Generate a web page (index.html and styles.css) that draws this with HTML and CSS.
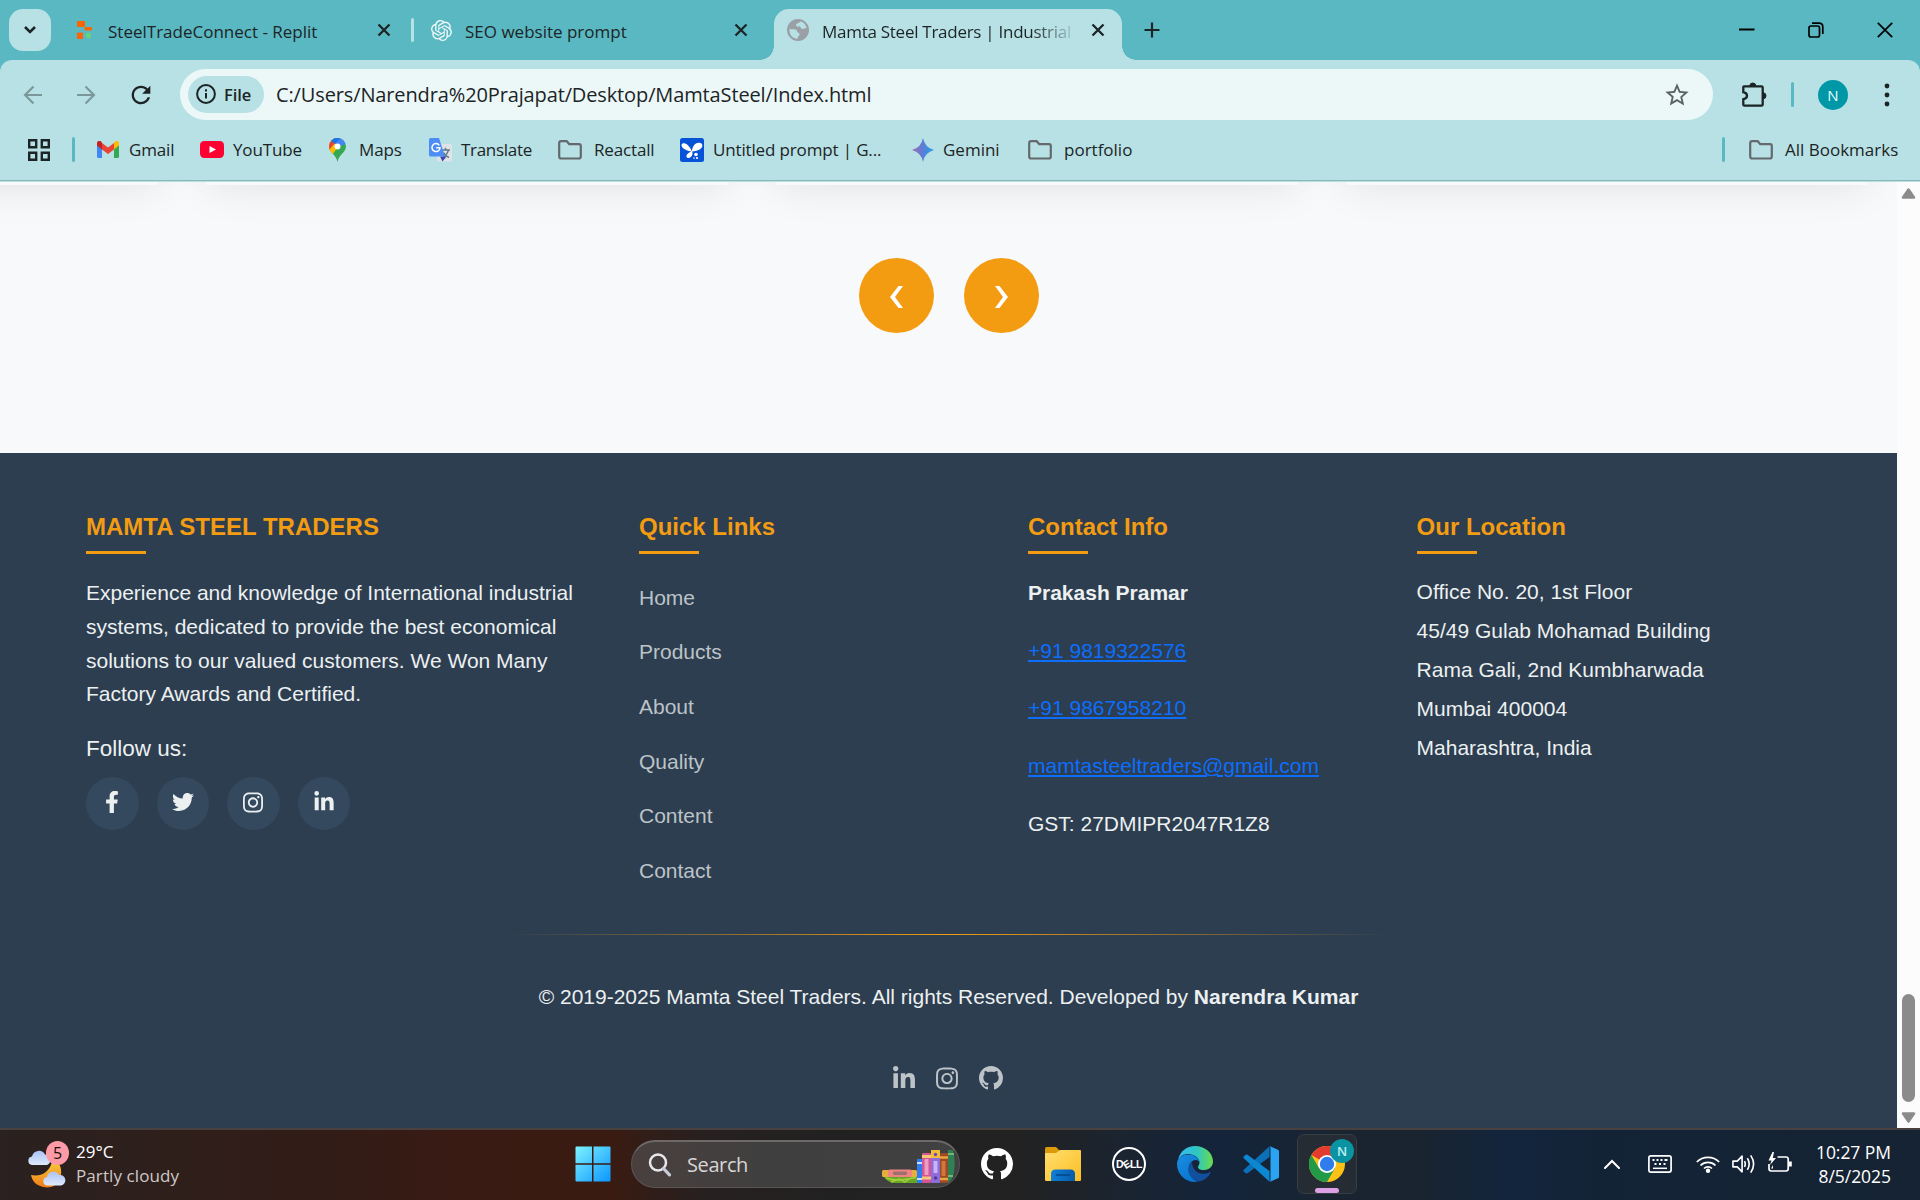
FILE: index.html
```html
<!DOCTYPE html>
<html lang="en">
<head>
<meta charset="utf-8">
<title>Mamta Steel Traders | Industrial</title>
<link rel="stylesheet" href="styles.css">
</head>
<body>
<svg class="defs" aria-hidden="true">
  <symbol id="x" viewBox="0 0 14 14"><path d="M1.5 1.5l11 11M12.500 1.500l-11 11" fill="none" stroke="currentColor" stroke-width="2.300"/></symbol>
  <symbol id="folder" viewBox="0 0 24 20"><path d="M1.200 3.200q0-2 2-2h5.600l2.500 3H21q1.800 0 1.800 1.800v10.500q0 2-2 2H3.200q-2 0-2-2z" fill="none" stroke="#63696c" stroke-width="2.200" stroke-linejoin="round"/></symbol>
  <symbol id="github" viewBox="0 0 16 16"><path fill="currentColor" d="M8 0C3.580 0 0 3.580 0 8c0 3.540 2.290 6.530 5.470 7.590.4.070.55-.17.55-.38 0-.19-.01-.82-.01-1.490-2.010.37-2.530-.49-2.690-.94-.09-.23-.48-.94-.82-1.130-.28-.15-.68-.52-.01-.53.63-.01 1.080.58 1.230.82.72 1.210 1.870.87 2.330.66.070-.52.280-.87.510-1.070-1.780-.2-3.640-.89-3.640-3.950 0-.87.310-1.590.820-2.150-.08-.2-.36-1.020.080-2.120 0 0 .67-.21 2.200.82.64-.18 1.320-.27 2-.27s1.360.09 2 .27c1.530-1.040 2.200-.82 2.200-.82.440 1.100.160 1.920.080 2.120.51.560.820 1.270.820 2.150 0 3.070-1.870 3.750-3.650 3.950.29.250.540.730.540 1.480 0 1.070-.01 1.930-.01 2.200 0 .21.150.460.550.380A8.010 8.010 0 0 0 16 8c0-4.420-3.580-8-8-8z"/></symbol>
  <symbol id="instagram" viewBox="0 0 448 512"><path fill="currentColor" d="M224.1 141c-63.6 0-114.9 51.3-114.9 114.9s51.3 114.9 114.9 114.9S339 319.5 339 255.9 287.7 141 224.1 141zm0 189.6c-41.1 0-74.7-33.5-74.7-74.7s33.5-74.7 74.7-74.7 74.7 33.5 74.7 74.7-33.6 74.7-74.7 74.7zm146.4-194.3c0 14.9-12 26.8-26.8 26.8-14.9 0-26.8-12-26.8-26.8s12-26.8 26.8-26.8 26.8 12 26.8 26.8zm76.1 27.2c-1.7-35.9-9.9-67.7-36.2-93.9-26.2-26.2-58-34.4-93.9-36.2-37-2.1-147.9-2.1-184.9 0-35.8 1.7-67.6 9.9-93.9 36.1s-34.4 58-36.2 93.9c-2.1 37-2.1 147.9 0 184.9 1.7 35.9 9.9 67.7 36.2 93.9s58 34.4 93.9 36.2c37 2.1 147.9 2.1 184.9 0 35.9-1.7 67.7-9.9 93.9-36.2 26.2-26.2 34.4-58 36.2-93.9 2.1-37 2.1-147.8 0-184.8zM398.8 388c-7.8 19.6-22.9 34.7-42.6 42.6-29.5 11.7-99.5 9-132.1 9s-102.7 2.6-132.1-9c-19.6-7.8-34.7-22.9-42.6-42.6-11.7-29.5-9-99.5-9-132.1s-2.6-102.7 9-132.1c7.8-19.6 22.9-34.7 42.6-42.6 29.5-11.7 99.5-9 132.1-9s102.7-2.6 132.1 9c19.6 7.8 34.7 22.9 42.6 42.6 11.7 29.5 9 99.5 9 132.1s2.7 102.7-9 132.1z"/></symbol>
  <symbol id="linkedin" viewBox="0 0 448 512"><path fill="currentColor" d="M100.28 448H7.4V148.9h92.88zM53.79 108.1C24.09 108.1 0 83.5 0 53.8a53.79 53.79 0 0 1 107.58 0c0 29.7-24.1 54.3-53.79 54.3zM447.9 448h-92.68V302.4c0-34.7-.7-79.2-48.29-79.2-48.29 0-55.69 37.7-55.69 76.7V448h-92.78V148.9h89.08v40.8h1.3c12.4-23.5 42.69-48.3 87.88-48.3 94 0 111.28 61.9 111.28 142.3V448z"/></symbol>
</svg>

<header class="chrome">
  <div class="tabstrip">
    <div class="tab-search"><svg width="14" height="10" viewBox="0 0 14 10"><path d="M2 2l5 5 5-5" fill="none" stroke="#1d2426" stroke-width="2.600"/></svg></div>
    <div class="tab tab-replit">
      <svg width="16" height="18" viewBox="0 0 16 18"><rect width="8" height="6" rx="1" fill="#fb6500"/><rect x="7.500" y="6" width="7.500" height="3.500" rx="1" fill="#fb6500"/><rect y="11.500" width="6" height="6.500" rx="1" fill="#fb6500"/><circle cx="11.500" cy="14.500" r="2.700" fill="#63d67c"/></svg>
      <span class="title">SteelTradeConnect - Replit</span>
      <svg class="close" width="14" height="14"><use href="#x"/></svg>
    </div>
    <i class="tab-sep"></i>
    <div class="tab tab-seo">
      <svg width="21" height="21" viewBox="0 0 24 24"><path fill="#eefafa" d="M22.2819 9.8211a5.9847 5.9847 0 0 0-.5157-4.9108 6.0462 6.0462 0 0 0-6.5098-2.9A6.0651 6.0651 0 0 0 4.9807 4.1818a5.9847 5.9847 0 0 0-3.9977 2.9 6.0462 6.0462 0 0 0 .7427 7.0966 5.98 5.98 0 0 0 .511 4.9107 6.051 6.051 0 0 0 6.5146 2.9001A5.9847 5.9847 0 0 0 13.2599 24a6.0557 6.0557 0 0 0 5.7718-4.2058 5.9894 5.9894 0 0 0 3.9977-2.9001 6.0557 6.0557 0 0 0-.7475-7.0729zm-9.022 12.6081a4.4755 4.4755 0 0 1-2.8764-1.0408l.1419-.0804 4.7783-2.7582a.7948.7948 0 0 0 .3927-.6813v-6.7369l2.02 1.1686a.071.071 0 0 1 .038.052v5.5826a4.504 4.504 0 0 1-4.4945 4.4944zm-9.6607-4.1254a4.4708 4.4708 0 0 1-.5346-3.0137l.142.0852 4.783 2.7582a.7712.7712 0 0 0 .7806 0l5.8428-3.3685v2.3324a.0804.0804 0 0 1-.0332.0615L9.74 19.9502a4.4992 4.4992 0 0 1-6.1408-1.6464zM2.3408 7.8956a4.485 4.485 0 0 1 2.3655-1.9728V11.6a.7664.7664 0 0 0 .3879.6765l5.8144 3.3543-2.0201 1.1685a.0757.0757 0 0 1-.071 0l-4.8303-2.7865A4.504 4.504 0 0 1 2.3408 7.872zm16.5963 3.8558L13.1038 8.364 15.1192 7.2a.0757.0757 0 0 1 .071 0l4.8303 2.7913a4.4944 4.4944 0 0 1-.6765 8.1042v-5.6772a.79.79 0 0 0-.407-.667zm2.0107-3.0231l-.142-.0852-4.7735-2.7818a.7759.7759 0 0 0-.7854 0L9.409 9.2297V6.8974a.0662.0662 0 0 1 .0284-.0615l4.8303-2.7866a4.4992 4.4992 0 0 1 6.6802 4.66zM8.3065 12.863l-2.02-1.1638a.0804.0804 0 0 1-.038-.0567V6.0742a4.4992 4.4992 0 0 1 7.3757-3.4537l-.142.0805L8.704 5.459a.7948.7948 0 0 0-.3927.6813zm1.0976-2.3654l2.602-1.4998 2.6069 1.4998v2.9994l-2.5974 1.4997-2.6067-1.4997Z"/></svg>
      <span class="title">SEO website prompt</span>
      <svg class="close" width="14" height="14"><use href="#x"/></svg>
    </div>
    <div class="tab tab-active">
      <svg width="22" height="22" viewBox="0 0 22 22"><circle cx="11" cy="11" r="11" fill="#9aa0a6"/><path d="M2.500 10c3 .5 7-.5 7.500 2 .3 2 2.500 1.500 2.500 3.500 0 1.500-2 2-2 4.300C5 19.500 2 15 2.500 10zM13 2.500c-.5 2-4 1.500-4 3.500s2.500 2 3.500 1.200c1.500 0 1 2.800 3 2.800s2.500-1 4-.5C19.200 6 17 3 13 2.500z" fill="#b7e1e4"/></svg>
      <span class="title">Mamta Steel Traders | Industrial</span>
      <svg class="close" width="14" height="14"><use href="#x"/></svg>
    </div>
    <svg class="newtab" width="16" height="16" viewBox="0 0 16 16"><path d="M8 .5v15M.5 8h15" stroke="#1d2426" stroke-width="2.200"/></svg>
    <div class="window-controls">
      <svg width="16" height="16" viewBox="0 0 16 16"><path d="M0 7.500h15.500" stroke="#000" stroke-width="2"/></svg>
      <svg width="16" height="16" viewBox="0 0 16 16"><rect x="1" y="4" width="10.500" height="11" rx="2" fill="none" stroke="#000" stroke-width="1.700"/><path d="M4 1.200h7q3.800 0 3.800 3.800v7" fill="none" stroke="#000" stroke-width="1.700"/></svg>
      <svg width="16" height="16" viewBox="0 0 16 16"><path d="M.8.8l14.400 14.400M15.200.8L.8 15.200" stroke="#000" stroke-width="1.700"/></svg>
    </div>
  </div>

  <div class="toolbar">
    <div class="nav">
      <svg width="20" height="20" viewBox="0 0 20 20"><path d="M10.500 1.500L2 10l8.500 8.500M2 10h17" fill="none" stroke="#7b9799" stroke-width="2.100"/></svg>
      <svg width="20" height="20" viewBox="0 0 20 20"><path d="M9.500 1.500L18 10l-8.500 8.500M18 10H1" fill="none" stroke="#7b9799" stroke-width="2.100"/></svg>
      <svg width="28" height="28" viewBox="0 0 24 24"><path fill="#1d2426" d="M17.650 6.350C16.200 4.900 14.210 4 12 4c-4.420 0-7.990 3.580-7.990 8s3.570 8 7.990 8c3.730 0 6.840-2.550 7.730-6h-2.080c-.82 2.330-3.040 4-5.650 4-3.310 0-6-2.690-6-6s2.690-6 6-6c1.660 0 3.140.69 4.220 1.780L13 11h7V4l-2.350 2.350z"/></svg>
    </div>
    <div class="omnibox">
      <div class="chip">
        <svg width="20" height="20" viewBox="0 0 20 20"><circle cx="10" cy="10" r="8.900" fill="none" stroke="#1d2426" stroke-width="2"/><path d="M10 9v5.500M10 5.200v2.200" stroke="#1d2426" stroke-width="2"/></svg>
        <span>File</span>
      </div>
      <span class="url">C:/Users/Narendra%20Prajapat/Desktop/MamtaSteel/Index.html</span>
      <svg class="star" width="28" height="28" viewBox="0 0 24 24"><path fill="#5a6264" d="M22 9.240l-7.190-.62L12 2 9.190 8.630 2 9.240l5.460 4.730L5.820 21 12 17.270 18.180 21l-1.630-7.030L22 9.240zM12 15.400l-3.760 2.270 1-4.280-3.320-2.880 4.380-.38L12 6.100l1.710 4.040 4.380.38-3.320 2.880 1 4.280L12 15.400z"/></svg>
    </div>
    <svg class="puzzle" width="26" height="26" viewBox="0 0 26 26"><path d="M3 4.300h17.500q1.200 0 1.200 1.200v17q0 1.200-1.200 1.200H3.500q-1.200 0-1.200-1.200v-5.300q3.700-.5 3.700-3.400T2.300 10.200V5q0-.7.7-.7z" fill="none" stroke="#1d2426" stroke-width="2.300"/><path d="M8.800 4a3 3 0 0 1 6 0zM22 10.800a3 3 0 0 1 0 6z" fill="#1d2426" stroke="#1d2426"/></svg>
    <i class="bar-sep"></i>
    <span class="avatar">N</span>
    <svg class="dots" width="6" height="26" viewBox="0 0 6 26"><g fill="#1d2426"><circle cx="3" cy="4" r="2.400"/><circle cx="3" cy="13" r="2.400"/><circle cx="3" cy="22" r="2.400"/></g></svg>
  </div>

  <nav class="bookmarks">
    <svg class="apps" width="22" height="22" viewBox="0 0 22 22"><path d="M1.200 1.200h7v7h-7zM13.800 1.200h7v7h-7zM1.200 13.800h7v7h-7zM13.800 13.800h7v7h-7z" fill="none" stroke="#1d2426" stroke-width="2.400"/></svg>
    <i class="bar-sep"></i>
    <a class="bm bm-gmail"><svg width="22" height="17" viewBox="0 0 22 17"><path d="M0 3v12.500Q0 17 1.500 17H5V6z" fill="#4285f4"/><path d="M22 3v12.500q0 1.500-1.500 1.500H17V6z" fill="#34a853"/><path d="M17 2v6.500l5-4V2.200C22-.2 19.500-.8 17.800.6z" fill="#fbbc04"/><path d="M0 2.200v2.300l5 4V2L4.200.6C2.500-.8 0-.2 0 2.200z" fill="#c5221f"/><path d="M5 2v6.500l6 4.500 6-4.500V2l-6 4.500z" fill="#ea4335"/></svg><span>Gmail</span></a>
    <a class="bm bm-youtube"><svg width="24" height="17" viewBox="0 0 24 17"><rect width="24" height="17" rx="4.200" fill="#ff0033"/><path d="M9.500 5l6.500 3.500-6.500 3.500z" fill="#fff"/></svg><span>YouTube</span></a>
    <a class="bm bm-maps"><svg width="17" height="24" viewBox="0 0 17 24"><defs><clipPath id="pin"><path d="M8.500 0A8.500 8.500 0 0 0 0 8.500c0 6 7 7.500 8.500 15.500C10 16 17 14.500 17 8.500A8.500 8.500 0 0 0 8.500 0z"/></clipPath></defs><g clip-path="url(#pin)"><path d="M0 0h17v24H0z" fill="#34a853"/><path d="M0 4l9 4.500L3 17H0z" fill="#fbbc04"/><path d="M0 0h6l3 8-6.500 5L0 12z" fill="#ea4335"/><path d="M0 12l6-7 3 4-6 7.500z" fill="#fbbc04"/><path d="M3 0h14v6l-6 2-5-3z" fill="#4285f4"/><path d="M2 2.500L6 6l5-6H4z" fill="#1a73e8"/></g><circle cx="8.500" cy="8.500" r="3" fill="#fff"/></svg><span>Maps</span></a>
    <a class="bm bm-translate"><svg width="23" height="24" viewBox="0 0 23 24"><rect x="8" y="6" width="15" height="17.500" rx="1.500" fill="#dfe3e6"/><path d="M12.500 12h8.500M16.500 9.800V12M19.500 12q-1.500 5-6 7.500M14.500 14.500q2 4 5.500 5" stroke="#607988" stroke-width="1.400" fill="none"/><path d="M11 18.500l2.500 5 4-5z" fill="#3949ab"/><path d="M1.500 0H10l6 18.500H1.500Q0 18.500 0 17V1.500Q0 0 1.500 0z" fill="#4d8df6"/><path d="M10.300 7.300A4 4 0 1 0 11 9.700H7.200" stroke="#fff" stroke-width="1.500" fill="none"/></svg><span>Translate</span></a>
    <a class="bm bm-react"><svg width="24" height="20"><use href="#folder"/></svg><span>Reactall</span></a>
    <a class="bm bm-prompt"><svg width="24" height="24" viewBox="0 0 24 24"><rect width="24" height="24" rx="2.500" fill="#0653d8"/><path d="M12 13.500C8 13.500 1 10.500 1.500 7s7-2.500 10.500 6.500zM12 13.500C12 7 17 3.500 20.500 5s3 7.500-8.500 8.500zM12 13c1.500 3.500-.5 6.800-3.500 7s-3.500-4 3.500-7z" fill="#fff"/><circle cx="16" cy="16.500" r="1.800" fill="#fff"/><circle cx="17" cy="20" r="1.100" fill="#fff"/><circle cx="14" cy="20" r=".8" fill="#fff"/></svg><span>Untitled prompt | G...</span></a>
    <a class="bm bm-gemini"><svg width="22" height="24" viewBox="0 0 22 22" preserveAspectRatio="none"><defs><linearGradient id="gem"><stop offset="0" stop-color="#a06bb0"/><stop offset=".5" stop-color="#5a7fd8"/><stop offset="1" stop-color="#1fa2e6"/></linearGradient></defs><path d="M11 0q1.800 8.800 11 11-9.200 2.200-11 11-1.800-8.800-11-11 9.200-2.200 11-11z" fill="url(#gem)"/></svg><span>Gemini</span></a>
    <a class="bm bm-portfolio"><svg width="24" height="20"><use href="#folder"/></svg><span>portfolio</span></a>
    <i class="bar-sep last-sep"></i>
    <a class="bm bm-all"><svg width="24" height="20"><use href="#folder"/></svg><span>All Bookmarks</span></a>
  </nav>
</header>

<div class="viewport">
  <div class="page">
    <section class="carousel">
      <div class="card-row"><i></i><i></i><i></i><i></i></div>
      <div class="arrows">
        <button><svg width="15" height="24" viewBox="0 0 15 24"><path d="M9.500 1H14L6 12l8 11H9.500L1 12z" fill="#fff"/></svg></button>
        <button><svg width="15" height="24" viewBox="0 0 15 24"><path d="M5.500 1H1l8 11-8 11h4.500L14 12z" fill="#fff"/></svg></button>
      </div>
    </section>
    <footer class="footer">
      <div class="columns">
        <div>
          <h4>MAMTA STEEL TRADERS</h4>
          <p class="about">Experience and knowledge of International industrial systems, dedicated to provide the best economical solutions to our valued customers. We Won Many Factory Awards and Certified.</p>
          <div class="follow">Follow us:</div>
          <div class="social">
            <a><svg width="14" height="22" viewBox="0 0 320 512"><path fill="currentColor" d="M279.14 288l14.22-92.66h-88.91v-60.13c0-25.35 12.42-50.06 52.24-50.06h40.42V6.26S260.43 0 225.36 0c-73.22 0-121.08 44.38-121.08 124.72v70.62H22.89V288h81.39v224h100.17V288z"/></svg></a>
            <a><svg width="22" height="22" viewBox="0 0 512 512"><path fill="currentColor" d="M459.37 151.716c.325 4.548.325 9.097.325 13.645 0 138.72-105.583 298.558-298.558 298.558-59.452 0-114.68-17.219-161.137-47.106 8.447.974 16.568 1.299 25.34 1.299 49.055 0 94.213-16.568 130.274-44.832-46.132-.975-84.792-31.188-98.112-72.772 6.498.974 12.995 1.624 19.818 1.624 9.421 0 18.843-1.3 27.614-3.573-48.081-9.747-84.143-51.98-84.143-102.985v-1.299c13.969 7.797 30.214 12.67 47.431 13.319-28.264-18.843-46.781-51.005-46.781-87.391 0-19.492 5.197-37.36 14.294-52.954 51.655 63.675 129.3 105.258 216.365 109.807-1.624-7.797-2.599-15.918-2.599-24.04 0-57.828 46.782-104.934 104.934-104.934 30.213 0 57.502 12.67 76.67 33.137 23.715-4.548 46.456-13.32 66.599-25.34-7.798 24.366-24.366 44.833-46.132 57.827 21.117-2.273 41.584-8.122 60.426-16.243-14.292 20.791-32.161 39.308-52.628 54.253z"/></svg></a>
            <a><svg width="20" height="23"><use href="#instagram"/></svg></a>
            <a><svg width="20" height="22"><use href="#linkedin"/></svg></a>
          </div>
        </div>
        <div>
          <h4>Quick Links</h4>
          <ul class="links"><li>Home</li><li>Products</li><li>About</li><li>Quality</li><li>Content</li><li>Contact</li></ul>
        </div>
        <div>
          <h4>Contact Info</h4>
          <div class="contact">
            <b>Prakash Pramar</b>
            <a>+91 9819322576</a>
            <a>+91 9867958210</a>
            <a>mamtasteeltraders@gmail.com</a>
            <span>GST: 27DMIPR2047R1Z8</span>
          </div>
        </div>
        <div>
          <h4>Our Location</h4>
          <div class="address">Office No. 20, 1st Floor<br>45/49 Gulab Mohamad Building<br>Rama Gali, 2nd Kumbharwada<br>Mumbai 400004<br>Maharashtra, India</div>
        </div>
      </div>
      <div class="divider"></div>
      <p class="copyright">© 2019-2025 Mamta Steel Traders. All rights Reserved. Developed by <b>Narendra Kumar</b></p>
      <div class="dev-links">
        <svg width="22" height="25"><use href="#linkedin"/></svg>
        <svg width="22" height="25"><use href="#instagram"/></svg>
        <svg width="24" height="24"><use href="#github"/></svg>
      </div>
    </footer>
  </div>
  <div class="scrollbar">
    <svg width="15" height="11" viewBox="0 0 15 11"><path d="M7.500 1.500l5.500 8H2z" fill="#8b8b8b" stroke="#8b8b8b" stroke-width="2.500" stroke-linejoin="round"/></svg>
    <i class="thumb"></i>
    <svg width="15" height="11" viewBox="0 0 15 11"><path d="M7.500 9.500l5.500-8H2z" fill="#8b8b8b" stroke="#8b8b8b" stroke-width="2.500" stroke-linejoin="round"/></svg>
  </div>
</div>

<div class="taskbar">
  <div class="weather">
    <div class="weather-icon">
      <svg width="38" height="42" viewBox="0 0 38 42"><defs><linearGradient id="cloud" x2="0" y2="1"><stop offset="0" stop-color="#a9c4f5"/><stop offset="1" stop-color="#dfe9fb"/></linearGradient><linearGradient id="moon" x2="0" y2="1"><stop offset="0" stop-color="#f8c93a"/><stop offset="1" stop-color="#f07c18"/></linearGradient></defs><path d="M3 29c9 2 18-2 21-13 6-1 10 3 9 13s-10 14-18 12S4 34 3 29z" fill="url(#moon)"/><path d="M4 19a4.300 4.300 0 0 1 0-8.500 7 7 0 0 1 13-2 5.500 5.500 0 0 1 2 10.500z" fill="url(#cloud)"/><path d="M19 39.500a4.300 4.300 0 0 1 0-8.500 6.500 6.500 0 0 1 12-2 5.300 5.300 0 0 1 2 10.500z" fill="url(#cloud)"/></svg>
      <span class="count">5</span>
    </div>
    <div class="weather-text"><span>29°C</span><span class="dim">Partly cloudy</span></div>
  </div>
  <svg class="start" width="36" height="36" viewBox="0 0 36 36"><defs><linearGradient id="win" x2="1" y2="1"><stop offset="0" stop-color="#7df3ff"/><stop offset=".5" stop-color="#45c4ff"/><stop offset="1" stop-color="#0a96ff"/></linearGradient></defs><path d="M1.500.5H17v16.800H.5V1.500q0-1 1-1zM18.500.5h16q1 0 1 1v15.800h-17zM.5 18.700H17v16.800H1.500q-1 0-1-1zM18.500 18.700h17v15.800q0 1-1 1h-16z" fill="url(#win)"/></svg>
  <div class="search">
    <svg width="24" height="24" viewBox="0 0 24 24"><circle cx="10" cy="9.500" r="8" fill="none" stroke="#e8e8ec" stroke-width="2.500"/><path d="M15.500 15.500l6 6.300" stroke="#c9cdd8" stroke-width="3.200" stroke-linecap="round"/></svg>
    <span>Search</span>
    <svg class="books" width="74" height="34" viewBox="0 0 74 34"><path d="M1 26h36v7H12Q6 33 1 26z" fill="#66a526"/><path d="M4 28q10 4 30-.5M9 32l8-3 6 3 6-4" stroke="#a3cf3c" stroke-width="1.500" fill="none"/><rect x="0" y="20" width="35" height="7" rx="1.500" fill="#e7ae3e"/><rect x="6" y="19.500" width="24" height="7.500" rx="2" fill="#f08282"/><rect x="11" y="21.500" width="14" height="3.500" rx="1.500" fill="#9d7070"/><rect x="35" y="9" width="5" height="24" fill="#2e7cf0"/><path d="M35 13h5M35 29h5" stroke="#fff" stroke-width="1.500"/><rect x="40" y="3" width="9" height="30" rx="1" fill="#d55594"/><path d="M40 6.500h9M40 28h9" stroke="#f5c877" stroke-width="3"/><path d="M44.500 9v16" stroke="#ed9cc2" stroke-width="4"/><rect x="49" y="0" width="9" height="33" rx="1" fill="#8e6dda"/><rect x="49" y="0" width="9" height="8" fill="#f2bd39"/><path d="M53.500 11v12" stroke="#c9b4f5" stroke-width="4"/><circle cx="53.500" cy="4.500" r="1.700" fill="#654ab3"/><circle cx="53.500" cy="28" r="1.700" fill="#523798"/><rect x="58" y="3" width="8" height="30" rx="1" fill="#9a4a26"/><path d="M58 7.500h8M58 29h8" stroke="#e9a43f" stroke-width="2.500"/><path d="M61.500 11v15" stroke="#d0783c" stroke-width="4"/><path d="M66 0h5q4 16-1 29l-4 4z" fill="#2f8055"/><path d="M66 4h6M66 26h5" stroke="#8ccb7c" stroke-width="1.500"/></svg>
  </div>
  <div class="apps-row">
    <svg class="gh" width="32" height="32"><use href="#github"/></svg>
    <svg width="36" height="34" viewBox="0 0 36 34"><defs><linearGradient id="fld" x2="1" y2="1"><stop offset="0" stop-color="#ffdf70"/><stop offset="1" stop-color="#fcbd22"/></linearGradient><linearGradient id="tray"><stop offset="0" stop-color="#0f7fd8"/><stop offset="1" stop-color="#075cac"/></linearGradient></defs><path d="M0 1.500Q0 0 1.500 0H11l4 4-3 5H0z" fill="#dc9a0a"/><path d="M0 7q0-1 1-1h10l4-3h20q1 0 1 1v29q0 1-1 1H1q-1 0-1-1z" fill="url(#fld)"/><path d="M6 34v-7q0-4.500 4.500-4.500h15q4.500 0 4.500 4.500v7z" fill="url(#tray)"/><path d="M11.500 28h13" stroke="#064685" stroke-width="1.700" stroke-linecap="round"/></svg>
    <div class="dell">D<em>E</em>LL</div>
    <svg width="36" height="36" viewBox="0 0 36 36"><defs><linearGradient id="edge1"><stop offset="0" stop-color="#38b9f4"/><stop offset=".55" stop-color="#2fc6c0"/><stop offset="1" stop-color="#6ddb4c"/></linearGradient><linearGradient id="edge2" x2=".7" y2="1"><stop offset="0" stop-color="#1b8ee0"/><stop offset="1" stop-color="#0874cf"/></linearGradient></defs><path d="M1 14C3 5 10 0 18 0c10 0 18 7 18 15.500 0 6-5 8.500-9.500 8.500-4 0-5.500-1.700-5.500-3 0-1 1.500-2 1.500-4.500C22.500 12 17 8 11 8 7 8 3 10 1 14z" fill="url(#edge1)"/><path d="M0 18C0 12 5 8.500 11 8.500c6 0 11 3.500 11.500 7.500-1-1.500-3-2-4.500-2-5 1-7 6-6 11 1 6 6 10 9 10.600Q20 36 18 36C8 36 0 28 0 18z" fill="url(#edge2)"/><path d="M15 15.500c-3 3-5 8-2.500 13S20 36 23 35.300c5-1.300 8.500-4.500 10.500-8.300.4-.8-.3-1.200-1-.8-8 4-17.500 0-17.500-10.700z" fill="#11509e"/></svg>
    <svg width="36" height="36" viewBox="0 0 36 36"><path d="M1 23.500L26.500.3V11L4.500 27.300q-1 .6-1.800 0L.6 25.500q-.8-1 .4-2z" fill="#0b70b8"/><path d="M1 12.500L26.500 35.700V25L4.500 8.700q-1-.6-1.800 0L.6 10.500q-.8 1 .4 2z" fill="#0c87d2"/><path d="M26.500 0L35 3.700q1 .5 1 1.500v25.600q0 1-1 1.500L26.500 36q1-.5 1-2V2q0-1.500-1-2z" fill="#2aa4f2"/></svg>
    <div class="chrome-app">
      <svg width="36" height="36" viewBox="0 0 36 36"><circle cx="18" cy="18" r="18" fill="#fbc116"/><path d="M18 18L2.400 9A18 18 0 0 1 33.600 9z" fill="#e33b2e"/><path d="M2.400 9A18 18 0 0 0 18 36l7.800-13.500L18 18l-7.800 4.500z" fill="#229a48"/><circle cx="18" cy="18" r="9" fill="#fff"/><circle cx="18" cy="18" r="7.200" fill="#2f7cec"/></svg>
      <span class="profile">N</span><i class="running"></i>
    </div>
  </div>
  <div class="tray">
    <svg class="up" width="16" height="10" viewBox="0 0 16 10"><path d="M1 9l7-7 7 7" fill="none" stroke="#fff" stroke-width="2" stroke-linecap="round"/></svg>
    <svg class="kbd" width="24" height="18" viewBox="0 0 24 18"><rect x=".9" y=".9" width="22.200" height="16.200" rx="2" fill="none" stroke="#fff" stroke-width="1.700"/><path d="M4.500 5h2M8.500 5h2M12.500 5h2M16.500 5h3M6.500 9h2M11 9h2M15.500 9h2" stroke="#fff" stroke-width="1.900"/><path d="M5 13.300h14" stroke="#fff" stroke-width="1.500"/></svg>
    <svg width="24" height="18" viewBox="0 0 24 18"><path d="M.8 7a15.800 15.800 0 0 1 22.400 0M4.500 10.500a10.800 10.800 0 0 1 15 0M8 13.500a5.800 5.800 0 0 1 8 0" fill="none" stroke="#fff" stroke-width="1.700"/><circle cx="12" cy="15.700" r="2.200" fill="#fff"/></svg>
    <svg width="24" height="20" viewBox="0 0 25 20"><path d="M1 7h4.500L10.500 1.800v16.400L5.500 13H1z" fill="none" stroke="#fff" stroke-width="1.700" stroke-linejoin="round"/><path d="M13 7q1.700 3 0 6M16 4q3.800 6 0 12M19.500 1q6 9 0 18" fill="none" stroke="#fff" stroke-width="1.700"/></svg>
    <svg class="battery" width="24" height="21" viewBox="0 0 24 21"><path d="M9.500 5H18q2.200 0 2.200 2.200v9.600q0 2.200-2.200 2.200H3.200Q1 19 1 16.800V12" fill="none" stroke="#fff" stroke-width="1.700"/><path d="M21 9.500h2.800v5H21zM4.500 0L.5 8.500h3L2 13l6-7H4.800L6 0zM3 16.500l2-3.500v3.500z" fill="#fff"/></svg>
    <div class="clock"><span>10:27 PM</span><span>8/5/2025</span></div>
  </div>
</div>
</body>
</html>
```
FILE: styles.css
```css
* { box-sizing: border-box; }
body {
  margin: 0; width: 1920px; height: 1200px; overflow: hidden;
  display: flex; flex-direction: column;
  font-family: "Open Sans", "Noto Sans", sans-serif;
}
svg { display: block; flex: none; }
.defs { position: absolute; width: 0; height: 0; }
span, a { white-space: nowrap; }

/* browser frame */
.chrome { height: 182px; background: #5ab8c2; flex: none; color: #1d2426; }
.tabstrip { height: 60px; display: flex; align-items: center; padding-left: 9px; }
.tab-search { width: 42px; height: 42px; border-radius: 14px; background: #b7e1e4; display: grid; place-items: center; }
.tab { display: flex; align-items: center; color: #1d2426; }
.title { font-size: 17px; line-height: 24px; padding-top: 3px; }
.close { margin-left: auto; }
.tab-replit { width: 314px; margin-left: 26px; gap: 15px; }
.tab-sep { width: 3px; height: 24px; border-radius: 2px; background: #b7e1e4; margin: 0 17px 0 20px; }
.tab-seo { width: 317px; gap: 13px; }
.tab-active {
  position: relative; width: 348px; height: 51px; align-self: flex-end; margin-left: 26px;
  padding: 0 17px 9px 13px; border-radius: 15px 15px 0 0; background: #b7e1e4; gap: 13px;
}
.tab-active::before, .tab-active::after { content: ""; position: absolute; bottom: 0; width: 14px; height: 14px; }
.tab-active::before { left: -14px; background: radial-gradient(circle at 0 0, transparent 13.500px, #b7e1e4 14px); }
.tab-active::after { right: -14px; background: radial-gradient(circle at 100% 0, transparent 13.500px, #b7e1e4 14px); }
.tab-active .title { letter-spacing: -.27px; mask-image: linear-gradient(90deg, #000 84%, transparent 103%); }
.newtab { margin-left: 22px; }
.window-controls { display: flex; gap: 53px; margin: 0 27px 0 auto; }

.toolbar { height: 70px; background: #b7e1e4; border-radius: 12px 12px 0 0; display: flex; align-items: center; padding: 0 30px 1px 23px; }
.nav { display: flex; align-items: center; gap: 33px; width: 157px; }
.nav svg:last-child { margin-left: -2px; }
.omnibox { width: 1533px; height: 51px; border-radius: 26px; background: #ecf8f8; display: flex; align-items: center; padding: 0 22px 0 8px; }
.chip { width: 76px; height: 37px; border-radius: 19px; background: #b7e1e4; display: flex; align-items: center; gap: 8px; padding: 0 0 1px 8px; font-size: 16.500px; font-weight: 600; letter-spacing: -.1px; }
.url { font-size: 20px; letter-spacing: -.13px; margin-left: 12px; padding-bottom: 1px; color: #1d2426; }
.star { margin-left: auto; }
.puzzle { margin-left: 28px; }
.bar-sep { width: 3px; height: 25px; border-radius: 2px; background: #5ab8c2; flex: none; }
.toolbar > .bar-sep { margin-left: 24px; }
.avatar { width: 30px; height: 30px; border-radius: 50%; background: #0097a7; color: #e8ffff; display: grid; place-items: center; font-size: 15px; margin-left: 24px; }
.dots { margin-left: auto; }

.bookmarks { height: 52px; background: #b7e1e4; border-bottom: 1px solid #b7e1e4; box-shadow: inset 0 -1px #8db4b7; display: flex; align-items: center; padding: 0 22px 12px 28px; }
.bookmarks > .bar-sep { margin: 0 22px 0 22px; }
.bm { display: flex; align-items: center; font-size: 17px; letter-spacing: -.15px; }
.bm-gmail { width: 103px; gap: 10px; }
.bm-youtube { width: 129px; gap: 9px; }
.bm-maps { width: 100px; gap: 13px; }
.bm-translate { width: 129px; gap: 9px; letter-spacing: -.3px; }
.bm-react { width: 122px; gap: 12px; }
.bm-prompt { width: 232px; gap: 9px; }
.bm-gemini { width: 116px; gap: 9px; letter-spacing: 0; }
.bm-portfolio { gap: 12px; letter-spacing: 0; }
.bookmarks > .last-sep { margin: 0 24px 0 auto; }
.bm-all { width: 149px; gap: 12px; letter-spacing: 0; }

/* web page */
.viewport { height: 946px; flex: none; display: flex; font-family: "Liberation Sans", Arial, sans-serif; }
.page { width: 1897px; }
.carousel { height: 271px; background: #f8f9fb; }
.card-row { height: 76px; overflow: hidden; display: flex; gap: 48px; padding-left: 206px; }
.card-row i { width: 522px; height: 60px; margin-top: -57px; flex: none; box-shadow: 0 0 44px rgba(0,0,0,.1); }
.card-row i:first-child { margin-left: -570px; }
.arrows { display: flex; justify-content: center; gap: 30px; }
.arrows button { width: 75px; height: 75px; padding: 3px 0 0; border: 0; border-radius: 50%; background: #f39c12; display: grid; place-items: center; }

.footer { height: 675px; background: #2c3e50; padding: 60px 86px 0; color: #ecf0f1; font-size: 21px; line-height: 33.750px; }
.columns { height: 421px; display: grid; grid-template-columns: 553px 389px 388.600px 1fr; }
h4 { margin: 0; height: 41px; font-size: 24px; line-height: 28px; color: #f39c12; }
h4::after { content: ""; display: block; width: 60px; height: 3px; margin-top: 10px; background: #f39c12; }
.about { width: 500px; margin: 22px 0 0; }
.follow { font-size: 22.500px; margin-top: 21px; line-height: 34px; }
.social { display: flex; gap: 18px; margin-top: 11px; }
.social a { width: 52.500px; height: 52.500px; border-radius: 50%; background: #34495e; display: grid; place-items: center; padding-bottom: 2px; }
.links { list-style: none; margin: 26.800px 0 0; padding: 0; display: grid; gap: 20.850px; color: #bdc3c7; }
.contact { margin-top: 22px; display: grid; gap: 23.950px; }
.contact a { color: #0d6efd; text-decoration: underline; }
.address { margin-top: 18px; line-height: 39.100px; }
.divider { width: 885px; height: 1px; margin: 0 auto; background: linear-gradient(90deg, transparent, #f39c12, transparent); }
.copyright { margin: 45px 0 0; text-align: center; }
.dev-links { display: flex; justify-content: center; align-items: center; gap: 21px; margin-top: 52px; padding-right: 1px; color: #bdc3c7; }

.scrollbar { width: 23px; background: #fcfcfc; display: flex; flex-direction: column; align-items: center; padding: 6px 0 5px; }
.thumb { width: 13px; height: 108px; border-radius: 7px; background: #8b8b8b; margin: auto 0 10px; }

/* taskbar */
.taskbar {
  height: 72px; flex: none; display: flex; align-items: center; color: #fff; font-size: 17px; padding-bottom: 2px;
  border-top: 2px solid #48413f;
  background: linear-gradient(90deg, #2a2120 0, #2f1f1b 180px, #321c17 320px, #3a1b13 480px, #3a1b12 610px, #272020 700px, #212121 850px, #222 1020px, #1b2430 1120px, #13243b 1220px, #1a2430 1340px, #1a2430 1420px, #12253d 1510px, #132336 1600px, #152333 1920px);
}
.weather { display: flex; width: 547px; margin-left: 28px; }
.weather-icon { position: relative; width: 48px; padding-top: 6px; }
.count { position: absolute; left: 18px; top: 1px; width: 23px; height: 24px; border-radius: 50%; background: #ff9ba6; color: #111; font-size: 16px; display: grid; place-items: center; }
.weather-text, .clock { display: flex; flex-direction: column; line-height: 24px; }
.dim { color: #cfc9c7; letter-spacing: .1px; }
.search { width: 329px; height: 48px; margin-left: 20px; padding: 0 3px 0 16px; border: 1px solid #5b5654; border-top: 2px solid #6c6968; border-radius: 24px; background: linear-gradient(90deg, #49403e, #403f3f 40%, #414141); display: flex; align-items: center; gap: 15px; font-size: 20px; letter-spacing: -.4px; color: #d8d6d5; }
.books { margin-left: auto; margin-top: 4px; }
.apps-row { display: flex; align-items: center; margin-left: 21px; gap: 30px; }
.gh { margin-right: 2px; }
.dell { width: 34px; height: 34px; border: 2px solid #fff; border-radius: 50%; display: flex; align-items: center; justify-content: center; font: bold 10.500px "Liberation Sans", sans-serif; letter-spacing: -.3px; margin: 0 1px; }
.dell em { transform: rotate(-32deg); font-style: normal; }
.chrome-app { position: relative; width: 60px; height: 60px; border: 1px solid #363d45; border-radius: 7px; background: #262c34; display: grid; place-items: center; margin-left: -12px; }
.profile { position: absolute; left: 32px; top: 4px; width: 24px; height: 24px; border-radius: 50%; background: #0a94a3; color: #bdeef2; font-size: 13px; font-weight: 600; display: grid; place-items: center; }
.running { position: absolute; left: 17px; bottom: 0; width: 24px; height: 5px; border-radius: 3px; background: #dda0e5; }
.tray { display: flex; align-items: center; gap: 12px; margin: 0 29px 0 auto; }
.up { margin-right: 16px; }
.kbd { margin-right: 12px; }
.battery { margin-top: -3px; }
.clock { width: 87px; align-items: flex-end; font-size: 17.500px; letter-spacing: -.05px; }
```
